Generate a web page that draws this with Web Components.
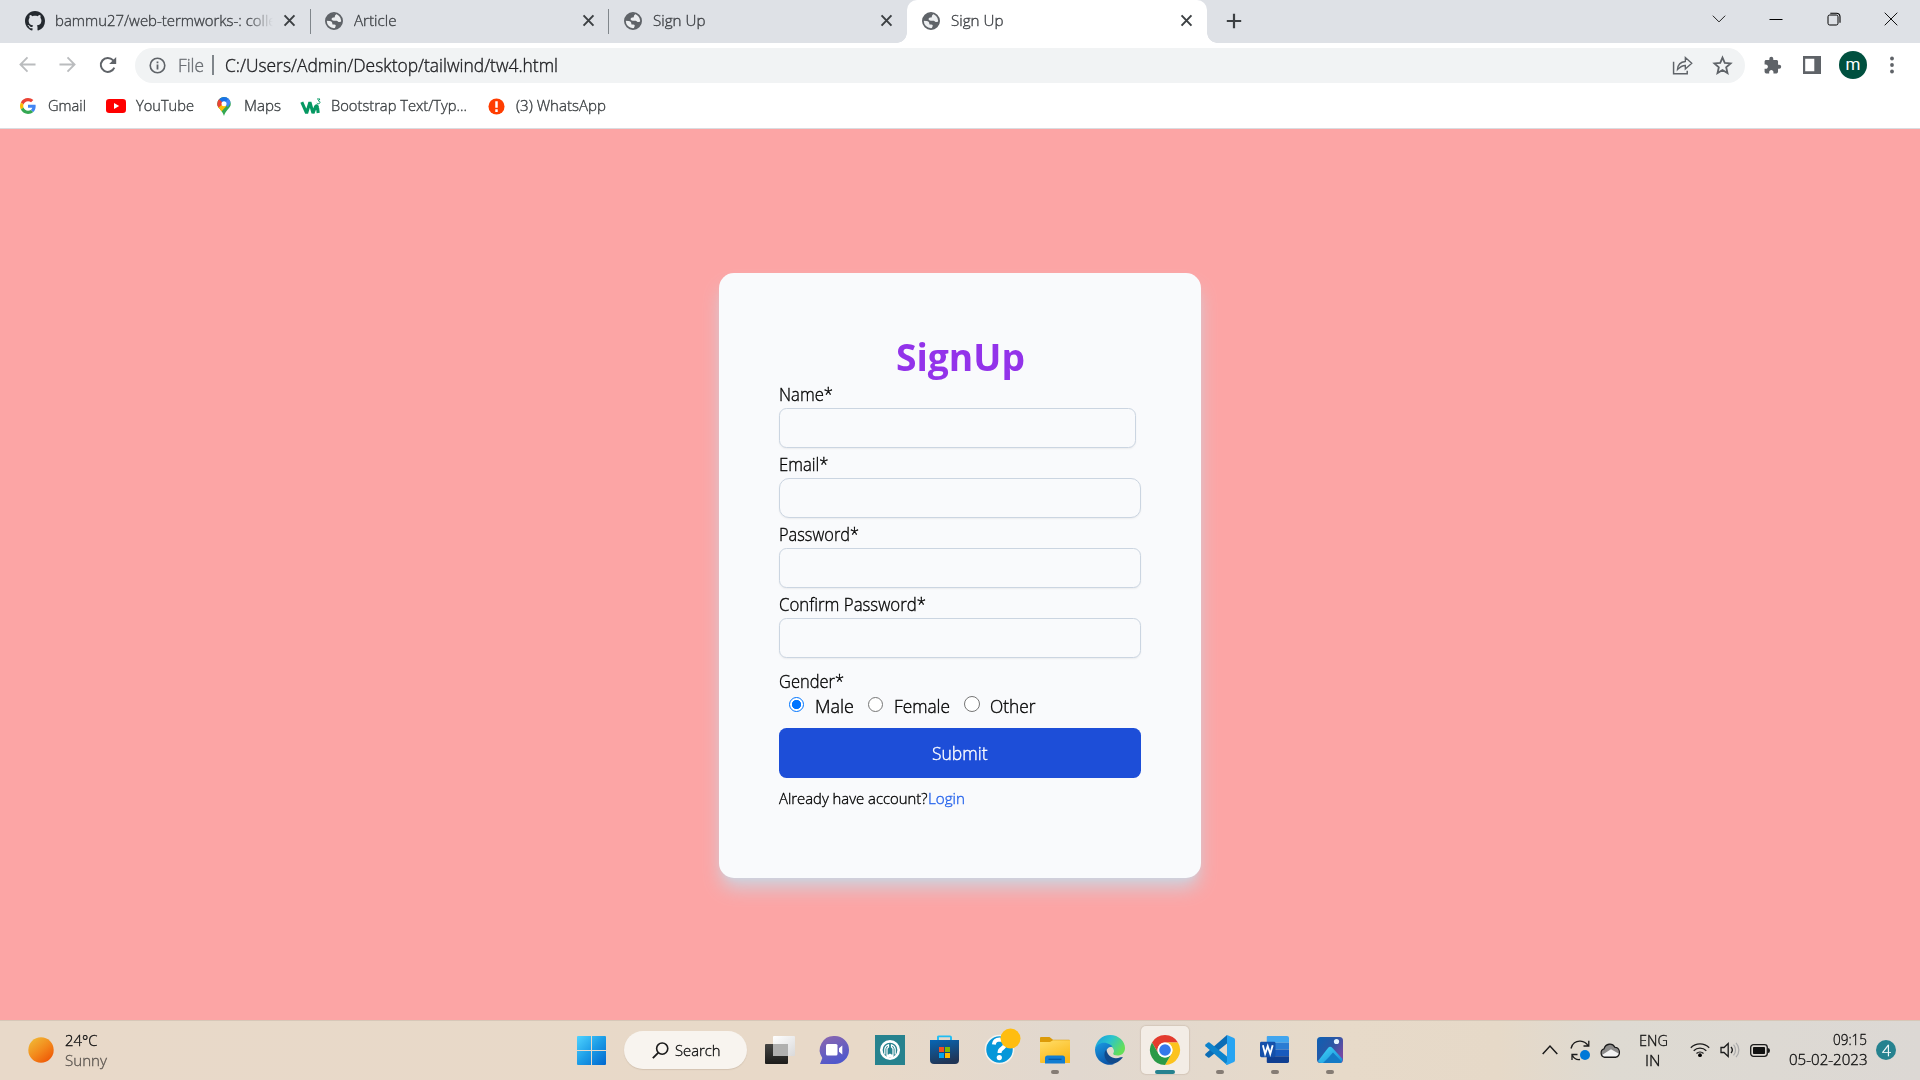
<!DOCTYPE html>
<html lang="en">
<head>
<meta charset="utf-8">
<title>Sign Up</title>
<style>
html,body{margin:0;height:100%;overflow:hidden}
body{display:flex;flex-direction:column;width:1920px;height:1080px;font-family:"Open Sans","Noto Sans",sans-serif;font-size:15px;font-weight:300;-webkit-text-stroke:.35px currentColor}
</style>
</head>
<body>
<browser-tabs></browser-tabs>
<browser-toolbar></browser-toolbar>
<bookmark-bar></bookmark-bar>
<signup-page></signup-page>
<task-bar></task-bar>
<script>
const ICONS = {
github:['0 0 16 16','<path fill="#24292f" d="M8 0C3.58 0 0 3.58 0 8c0 3.54 2.29 6.53 5.47 7.59.4.07.55-.17.55-.38 0-.19-.01-.82-.01-1.49-2.01.37-2.53-.49-2.69-.94-.09-.23-.48-.94-.82-1.13-.28-.15-.68-.52-.01-.53.63-.01 1.08.58 1.23.82.72 1.21 1.87.87 2.33.66.07-.52.28-.87.51-1.07-1.78-.2-3.64-.89-3.64-3.95 0-.87.31-1.59.82-2.15-.08-.2-.36-1.02.08-2.12 0 0 .67-.21 2.2.82.64-.18 1.32-.27 2-.27s1.36.09 2 .27c1.53-1.04 2.2-.82 2.2-.82.44 1.1.16 1.92.08 2.12.51.56.82 1.27.82 2.15 0 3.07-1.87 3.75-3.65 3.95.29.25.54.73.54 1.48 0 1.07-.01 1.93-.01 2.2 0 .21.15.46.55.38A8.01 8.01 0 0 0 16 8c0-4.42-3.58-8-8-8z"/>'],
globe:['0 0 18 18','<circle cx="9" cy="9" r="8.1" fill="#eceef0" stroke="#5f6368" stroke-width="1.8"/><path fill="#5f6368" d="M9.6 1.2C5 1 1.500 4.500 1.200 8.800L4.600 9.100C6.300 9.200 7.300 10.300 7.300 11.600L7.500 12.500H9.300C10.500 12.500 11 13.400 10.600 14.200L9.800 16.400C13.700 16 16.800 13 16.900 9C15.500 10.600 13.600 10.300 12.600 9.200C11.900 8.500 10.500 8.600 9.300 8.700C7.500 8.900 6.300 8 6.600 6.800C6.900 5.800 7.900 5.600 8.900 5.500C9.800 5.400 9.900 4.700 9.900 3.900C10.200 3 11.300 3 11.500 1.600Z"/>'],
x:['0 0 10 10','<path d="M.5.300 9.500 9.700M9.500.300.5 9.700" stroke="#3c4043" stroke-width="1.800"/>'],
plus:['0 0 16 16','<path d="M8 .8v14.400M.8 8h14.400" stroke="#3c4043" stroke-width="2.200"/>'],
down:['0 0 14 14','<path d="m.8 3.700 6.200 6.200 6.200-6.200" fill="none" stroke="#222"/>'],
min:['0 0 14 14','<path d="M.5 7.500h13" stroke="#000" stroke-width="1"/>'],
restore:['0 0 14 14','<rect x="1" y="3" width="10" height="10" rx="1.700" fill="none" stroke="#000"/><path d="M3.300 1.200h6.200a3.500 3.500 0 0 1 3.500 3.500v6" fill="none" stroke="#000" stroke-width="1.100"/>'],
close:['0 0 14 14','<path d="M.7.7 13.300 13.300M13.300.7.7 13.300" stroke="#111"/>'],
back:['0 0 18 18','<path d="M17.500 9H2M9 1.500 1.500 9 9 16.500" fill="none" stroke="#babcbe" stroke-width="1.900"/>'],
fwd:['0 0 18 18','<path d="M.5 9H16M9 1.500 16.500 9 9 16.500" fill="none" stroke="#babcbe" stroke-width="1.900"/>'],
reload:['0 0 18 18','<path d="M15.300 11.600A7 7 0 1 1 14 4.200l1.500 1.500" fill="none" stroke="#5f6368" stroke-width="2"/><path d="M17.200 1v7h-7z" fill="#5f6368"/>'],
info:['0 0 18 18','<circle cx="9" cy="9" r="7.700" fill="none" stroke="#5f6368" stroke-width="1.700"/><path d="M9 8v5.200M9 4.700v1.900" stroke="#5f6368" stroke-width="1.900"/>'],
share:['0 0 20 18','<path d="M1.500 5.500V17H14.500V14" fill="none" stroke="#5f6368" stroke-width="1.400"/><path d="M5.200 13C5.500 8 8.500 5.500 12.700 5.200V1.500L18.800 7 12.700 12.300V9C9.500 9 7.500 10.500 5.200 13Z" fill="none" stroke="#5f6368" stroke-width="1.300"/>'],
star:['0 0 18 18','<path d="m9 1.500 2.150 5.100 5.500.48-4.170 3.620 1.250 5.400L9 13.200 4.270 16.100l1.250-5.400L1.350 7.080l5.500-.48Z" fill="none" stroke="#5f6368" stroke-width="1.700"/>'],
puzzle:['0 0 24 24','<path fill="#5f6368" d="M20.500 11H19V7c0-1.100-.9-2-2-2h-4V3.500a2.500 2.500 0 0 0-5 0V5H4c-1.100 0-1.990.9-1.990 2v3.800H3.500c1.490 0 2.700 1.210 2.700 2.700s-1.210 2.700-2.700 2.700H2V20c0 1.100.9 2 2 2h3.800v-1.500c0-1.490 1.210-2.700 2.700-2.700 1.490 0 2.700 1.210 2.700 2.700V22H17c1.100 0 2-.9 2-2v-4h1.500a2.500 2.500 0 0 0 0-5z"/>'],
panel:['0 0 18 18','<path fill="#5f6368" fill-rule="evenodd" d="M0 0H18V18H0ZM2.200 2.700V15.300H11.300V2.700Z"/>'],
dots:['0 0 6 18','<g fill="#5f6368"><circle cx="3" cy="2.500" r="1.900"/><circle cx="3" cy="9" r="1.900"/><circle cx="3" cy="15.500" r="1.900"/></g>'],
google:['0 0 48 48','<path fill="#EA4335" d="M24 9.500c3.540 0 6.710 1.220 9.210 3.600l6.850-6.850C35.900 2.380 30.470 0 24 0 14.620 0 6.510 5.380 2.560 13.220l7.980 6.190C12.430 13.720 17.740 9.500 24 9.500z"/><path fill="#4285F4" d="M46.980 24.550c0-1.570-.15-3.090-.38-4.550H24v9.020h12.940c-.58 2.960-2.260 5.480-4.780 7.180l7.730 6c4.510-4.180 7.090-10.360 7.090-17.650z"/><path fill="#FBBC05" d="M10.530 28.590c-.48-1.450-.76-2.990-.76-4.590s.27-3.140.76-4.590l-7.980-6.190C.92 16.460 0 20.120 0 24c0 3.880.92 7.540 2.560 10.780l7.970-6.190z"/><path fill="#34A853" d="M24 48c6.480 0 11.930-2.130 15.890-5.810l-7.730-6c-2.150 1.450-4.920 2.300-8.160 2.300-6.260 0-11.570-4.220-13.470-9.910l-7.980 6.190C6.510 42.620 14.620 48 24 48z"/>'],
youtube:['0 0 20 14','<rect width="20" height="14" rx="3.200" fill="#f00"/><path d="M8 4v6l5.200-3z" fill="#fff"/>'],
maps:['0 0 14 19','<clipPath id="p"><path d="M7 0a6.800 6.800 0 0 0-6.800 6.800C.2 11.500 5.500 13 7 19 8.500 13 13.800 11.500 13.800 6.800A6.800 6.800 0 0 0 7 0Z"/></clipPath><g clip-path="url(#p)"><path fill="#34a853" d="M0 0h14v19H0z"/><path fill="#fbbc04" d="M-1 12 7 3l2.500 6L3 16z"/><path fill="#ea4335" d="M-1 1 3 2 7 6 0 12z"/><path fill="#1a73e8" d="M2 2 7 7l6-6-6-2z"/><path fill="#4285f4" d="M9 0h3l2 5-3 5-4-3 4-5z"/></g><circle cx="7" cy="6.700" r="2.500" fill="#fff"/>'],
w3:['0 0 20 17','<path d="M.8 4.200 5.600 15.200 8.900 4.200 12 15.200 14.600 8.500Q16.300 6.800 16.600 10L17.200 15" fill="none" stroke="#059862" stroke-width="3.100" stroke-linejoin="bevel"/><path d="M16 1h3L17.300 2.900c2.300.1 2.200 2.900-.1 2.900q-.9 0-1.400-.7" fill="none" stroke="#059862" stroke-width="1"/>'],
alert:['0 0 18 18','<circle cx="9" cy="9" r="8.500" fill="#ff3d00"/><path d="M9 3.500v6.800M9 12v2.700" stroke="#fff" stroke-width="2.600"/>'],
sun:['0 0 26 26','<defs><linearGradient id="s" x2=".8" y2="1"><stop stop-color="#f0c13a"/><stop offset=".55" stop-color="#f38a1c"/><stop offset="1" stop-color="#ee5505"/></linearGradient></defs><circle cx="13" cy="13" r="12.700" fill="url(#s)"/>'],
start:['0 0 29 29','<defs><linearGradient id="s" gradientUnits="userSpaceOnUse" x2="29" y2="29"><stop stop-color="#4fd3ff"/><stop offset=".5" stop-color="#1c9ce6"/><stop offset="1" stop-color="#0067cf"/></linearGradient></defs><path fill="url(#s)" d="M1 0h13v14H0V1q0-1 1-1ZM15 0h13q1 0 1 1v13H15ZM0 15h14v14H1q-1 0-1-1ZM15 15h14v13q0 1-1 1H15Z"/>'],
search:['0 0 18 18','<circle cx="10.800" cy="7" r="5.900" fill="none" stroke="#1b1b1b" stroke-width="1.700"/><path d="M6.700 11.200.9 17" stroke="#1b1b1b" stroke-width="2"/>'],
taskview:['0 0 30 28','<defs><linearGradient id="a" y2="1" x2="0"><stop stop-color="#454543"/><stop offset="1" stop-color="#1c1c1a"/></linearGradient><linearGradient id="b" x2="1" y2="1"><stop stop-color="#fff"/><stop offset="1" stop-color="#d9d9da"/></linearGradient></defs><rect y="8" width="23" height="20" rx="1" fill="url(#a)"/><rect x="8" width="22" height="20" rx="1" fill="url(#b)"/><path d="M8 8h15v12H8z" fill="#b0b0af"/>'],
chat:['0 0 29 28','<defs><linearGradient id="a" x2=".4" y2="1"><stop stop-color="#8d67ae"/><stop offset="1" stop-color="#5058cb"/></linearGradient></defs><path fill="url(#a)" d="M14.500 0A14 14 0 0 1 29 14 14 14 0 0 1 14.500 28H0L2.300 22A14 14 0 0 1 14.500 0Z"/><rect x="6" y="8" width="11.500" height="11.500" rx="1.500" fill="#fff"/><path d="M19 12.200 22.300 9.500V18.500L19 15.800Z" fill="#fff"/>'],
teal:['0 0 30 30','<path fill="#26828e" d="M0 0h30v30H0z"/><circle cx="15" cy="15" r="8.700" fill="none" stroke="#fff" stroke-width="2.700"/><path d="M9.800 19.500V14A5.200 5.200 0 0 1 13.500 9.800V12L12 13.500V21M20.200 19.500V14A5.200 5.200 0 0 0 16.500 9.800V12L18 13.500V21" fill="none" stroke="#fff" stroke-width="1.200"/><path d="M12 22V19.500H13.500L15 18.500 16.500 19.500H18V22Z" fill="#fff"/>'],
store:['0 0 29 30','<defs><linearGradient id="a" x2=".3" y2="1"><stop stop-color="#0766b5"/><stop offset="1" stop-color="#203657"/></linearGradient></defs><path d="M8 6V2.200Q8 1.400 9 1.400H20Q21 1.400 21 2.200V6" fill="none" stroke="#20bdf3" stroke-width="1.900"/><path d="M0 5h29v20q0 4-4 4H4q-4 0-4-4z" fill="url(#a)"/><path fill="#f25022" d="M9 12h5v5H9z"/><path fill="#7fba00" d="M15 12h5v5h-5z"/><path fill="#00a4ef" d="M9 18h5v5H9z"/><path fill="#ffb900" d="M15 18h5v5h-5z"/>'],
help:['0 0 38 38','<circle cx="15.500" cy="21.500" r="14" fill="#0697d9" stroke="#f6f3ee" stroke-width="1.500"/><path d="M9.800 16.500Q10.500 11.500 15.500 11.500 21 11.800 21 16 21 18.500 18 20.500 15.500 22 15.500 25" fill="none" stroke="#fff" stroke-width="4"/><circle cx="15.300" cy="29.600" r="2.600" fill="#fff"/><circle cx="26.500" cy="10.500" r="10" fill="#ffbd10"/>'],
folder:['0 0 30 28','<defs><linearGradient id="a" x2=".5" y2="1"><stop stop-color="#ffdd68"/><stop offset="1" stop-color="#fbb91b"/></linearGradient></defs><path d="M0 9V2Q0 1 1 1H9.500L13 3.700H29Q30 3.700 30 5V9Z" fill="#dc9a08"/><path d="M0 6H10L13 4.300H30V27H1Q0 27 0 26Z" fill="url(#a)"/><path d="M5 27.500V22Q5 19.500 7.500 19.500H22.500Q25 19.500 25 22V27.500Z" fill="#127dd1"/><path d="M8.500 23.300h13" stroke="#0656a0" stroke-width="1.200"/>'],
edge:['0 0 30 30','<defs><linearGradient id="a" x2="1" y2=".5"><stop stop-color="#1699df"/><stop offset=".5" stop-color="#2ac3ce"/><stop offset="1" stop-color="#64df58"/></linearGradient><linearGradient id="b" x2=".5" y2="1"><stop stop-color="#199be3"/><stop offset="1" stop-color="#0b55a8"/></linearGradient></defs><path d="M0 14C1 6 7 0 15 0 24 0 30 6.500 30 13 30 18 26.500 20.500 22.500 20.500 19.500 20.500 18 19.500 18.200 18.500 19.500 17 19.300 14 16.500 11.800 12 8 3 8 0 14Z" fill="url(#a)"/><path d="M0 14C2 9 7 6.800 12 8.300 16 9.500 17 11 17.500 11.800 13 11.500 10.500 15 11 19 11.500 25 16.500 28.500 20 28.500 17 30.500 11 30.200 7 27.500 2 24.500 0 19.500 0 14Z" fill="url(#b)"/><path d="M11.300 14.500C8 18 9.500 24 13 27 17 30.500 23.500 28 27.800 22.500 27.500 21.500 26.500 22 25.500 22.300 18 25 12.500 21 11.300 14.500Z" fill="#114a8b"/>'],
chrome:['0 0 48 48','<path fill="#e33b2e" d="M24 0A24 24 0 0 1 44.800 12H24A12 12 0 0 0 13.600 30L3.200 12A24 24 0 0 1 24 0Z"/><path fill="#fcc31e" d="M44.800 12A24 24 0 0 1 24 48L34.400 30A12 12 0 0 0 34.400 18 12 12 0 0 0 24 12Z"/><path fill="#2a9a47" d="M24 48A24 24 0 0 1 3.200 12L13.600 30A12 12 0 0 0 34.400 30Z"/><circle cx="24" cy="24" r="12" fill="#fff"/><circle cx="24" cy="24" r="9.300" fill="#3478ec"/>'],
code:['0 0 30 30','<path d="M22 0 22 8.500 4.500 22.500Q3.600 23 3 22.500L.5 20.400Q-.3 19.500.5 18.700Z" fill="#0b6cb5"/><path d="M22 30V21.500L4.500 7.500Q3.600 7 3 7.500L.5 9.600Q-.3 10.500.5 11.300Z" fill="#0d83cc"/><path d="M22 0 29 3Q30 3.500 30 5V25Q30 26.500 29 27L22 30 20.500 28.500 22 27Z" fill="#27a4f2"/>'],
word:['0 0 30 28','<path fill="#41a5ee" d="M8 0h20q2 0 2 2v5H7V1q0-1 1-1z"/><path fill="#2b7cd3" d="M7 7h23v7H7z"/><path fill="#185abd" d="M7 14h23v7H7z"/><path fill="#103f91" d="M7 21h23v5q0 2-2 2H8q-1 0-1-1z"/><rect y="6" width="16" height="16" rx="1.500" fill="#1550aa"/><path d="m3 9.500 2.300 9L8 10.500l2.600 8 2.500-9" fill="none" stroke="#fff" stroke-width="1.900"/>'],
photos:['0 0 26 26','<defs><linearGradient id="a" x2="1" y2=".6"><stop stop-color="#0e60b3"/><stop offset=".6" stop-color="#2c56a4"/><stop offset="1" stop-color="#754aa4"/></linearGradient><linearGradient id="b" x2="1" y2="1"><stop stop-color="#42d9f8"/><stop offset="1" stop-color="#168bd9"/></linearGradient></defs><rect width="26" height="26" rx="3.500" fill="url(#a)"/><path d="M1 24 11 11Q13 8.500 15.500 11L25.500 22Q25.500 26 22 26H4Q1.500 26 1 24Z" fill="url(#b)"/><path d="M12 20 16 15.500 25 25Q24 26 22 26H6Z" fill="#147ac5"/><circle cx="19.500" cy="4.500" r="2.600" fill="#e5f6ff"/>'],
up:['0 0 16 16','<path d="m.7 12 7.300-8 7.300 8" fill="none" stroke="#1b1b1b" stroke-width="1.500"/>'],
sync:['0 0 20 20','<path d="M1 8.500C2 3.500 6 .8 10.500 1.200 14 1.500 16.800 3.600 18.300 6M18.800.8V6H13.500M2 20V14.500H7.500M2.500 15.500C4 18.500 7 20 10 19.500" fill="none" stroke="#1b1b1b" stroke-width="1.300"/><circle cx="15" cy="15" r="5" fill="#0078d7"/>'],
cloud:['0 1 20 13.2','<path d="M4.500 13.500A3.700 3.700 0 0 1 4 6.200 6.200 6.200 0 0 1 15 4.800 4.400 4.400 0 0 1 16 13.500Z" fill="#8c8b8a"/><path d="M4.500 13.500A3.700 3.700 0 0 1 2 11.500L11 6.500 19 10.500Q18.300 13.500 16 13.500Z" fill="#f3f3f3"/><path d="M4.500 13.500A3.700 3.700 0 0 1 4 6.200 6.200 6.200 0 0 1 15 4.800 4.400 4.400 0 0 1 16 13.500Z" fill="none" stroke="#1b1b1b" stroke-width="1.200"/>'],
wifi:['0 0 20 16','<g fill="none" stroke="#1b1b1b" stroke-width="1.300"><path d="M.8 5.700A13 13 0 0 1 19.200 5.700M3.700 8.700A9 9 0 0 1 16.300 8.700M6.500 11.500A5 5 0 0 1 13.500 11.500"/></g><circle cx="10" cy="13.200" r="1.900"/>'],
sound:['0 0 20 16','<path d="M1 5.500H4L8.200 1.500V14.500L4 10.500H1Z" fill="none" stroke="#1b1b1b" stroke-width="1.300"/><path d="M11 5A4.500 4.500 0 0 1 11 11" fill="none" stroke="#1b1b1b" stroke-width="1.300"/><path d="M13.500 2.700A8 8 0 0 1 13.500 13.300M16 .8A10.500 10.500 0 0 1 16 15.200" fill="none" stroke="#aaa" stroke-width="1.200"/>'],
battery:['0 0 20 13','<rect x=".7" y=".7" width="16.600" height="11.600" rx="2.800" fill="none" stroke="#1b1b1b" stroke-width="1.300"/><rect x="3" y="3" width="12" height="7" rx=".8" fill="#111"/><path d="M18 4q2 0 2 2.500T18 9z" fill="#1b1b1b"/>']
};

class UiIcon extends HTMLElement{
  connectedCallback(){
    if(this.shadowRoot) return;
    const [box,art]=ICONS[this.getAttribute('name')];
    const [,,bw,bh]=box.split(' ').map(Number);
    const w=+this.getAttribute('w'), h=+(this.getAttribute('h')||w*bh/bw);
    this.attachShadow({mode:'open'}).innerHTML=`<style>:host{display:block;flex:none;width:${w}px;height:${h}px}svg{display:block;overflow:visible}</style><svg width="${w}" height="${h}" viewBox="${box}" preserveAspectRatio="none">${art}</svg>`;
  }
}
/* A text run condensed or widened to a set advance width. */
class FitText extends HTMLElement{
  connectedCallback(){
    if(this.shadowRoot) return;
    const w=+this.getAttribute('w');
    this.attachShadow({mode:'open'}).innerHTML=`<style>:host{display:block;flex:none;width:${w}px;white-space:pre;line-height:20px}span{display:inline-block;transform-origin:0 50%}</style><span><slot></slot></span>`;
    const s=this.shadowRoot.querySelector('span');
    const n=s.getBoundingClientRect().width;
    s.style.transform=`scaleX(${w/n})`;
  }
}
const element=(name,html)=>customElements.define(name,class extends HTMLElement{
  connectedCallback(){
    if(this.shadowRoot) return;
    const t=document.createElement('template');
    t.innerHTML=html;
    this.attachShadow({mode:'open'}).append(document.importNode(t.content,true));
  }
});

element('browser-tab',`<style>
:host{display:flex;box-sizing:border-box;width:298.6px;height:43px;flex:none;position:relative;padding:0 14.500px 2px 15px;align-items:center;color:#3f4246}
.title{flex:1;display:flex;overflow:hidden;margin:0 11px 0 11px;padding-bottom:2px}
:host([sep])::after{content:"";position:absolute;right:-1px;top:9px;width:1px;height:25px;background:#80868b}
:host([fade]) .title{mask-image:linear-gradient(90deg,#000 calc(100% - 26px),transparent)}
:host([active]){width:300px;background:#fff;border-radius:10px 10px 0 0}
:host([active])::before,:host([active])::after{content:"";position:absolute;bottom:0;width:10px;height:10px}
:host([active])::before{left:-10px;background:radial-gradient(circle at 0 0,transparent 9.500px,#fff 10px)}
:host([active])::after{right:-10px;background:radial-gradient(circle at 100% 0,transparent 9.500px,#fff 10px)}
</style><slot name="icon"></slot><div class="title"><slot></slot></div><ui-icon name="x" w="11"></ui-icon>`);

element('browser-tabs',`<style>
:host{display:flex;flex:none;height:43px;background:#dee1e6;padding-left:10px}
.first{width:299.500px;padding-left:14.500px}
.mid{padding-left:15.500px}
.plus{margin:13px auto 0 19px}
.win{display:flex;align-items:center;gap:43.500px;height:37px;padding-right:22px}
</style>
<browser-tab class="first" sep fade><ui-icon slot="icon" name="github" w="20"></ui-icon><fit-text w="221.500" style="margin-left:-.500px">bammu27/web-termworks-: colle</fit-text></browser-tab>
<browser-tab class="mid" sep><ui-icon slot="icon" name="globe" w="18"></ui-icon><fit-text w="42.500">Article</fit-text></browser-tab>
<browser-tab class="mid"><ui-icon slot="icon" name="globe" w="18"></ui-icon><fit-text w="52.500">Sign Up</fit-text></browser-tab>
<browser-tab active><ui-icon slot="icon" name="globe" w="18"></ui-icon><fit-text w="52.500">Sign Up</fit-text></browser-tab>
<ui-icon class="plus" name="plus" w="16"></ui-icon>
<div class="win"><ui-icon name="down" w="14"></ui-icon><ui-icon name="min" w="14"></ui-icon><ui-icon name="restore" w="14"></ui-icon><ui-icon name="close" w="14"></ui-icon></div>`);

element('browser-toolbar',`<style>
:host{display:flex;flex:none;height:44px;align-items:center;background:#fff;padding:0 25px 0 19px;box-sizing:border-box}
.nav{display:flex;gap:22.800px;width:116px}
.box{display:flex;align-items:center;box-sizing:border-box;height:35px;width:1610px;border-radius:18px;background:#f1f3f4;padding:0 13px 0 14px;font-size:17.500px;color:#202124}
.box .file{color:#6b6f74;margin-left:11.500px}
.bar{width:1.500px;height:20px;background:#80868b;margin:0 11px 0 8.500px}
.end{display:flex;gap:20px;margin-left:auto;align-items:center}
.right{display:flex;align-items:center;margin-left:18px}
.me{width:28px;height:28px;border-radius:50%;background:#00503f;color:#fff;display:flex;justify-content:center;font:400 17px/26px Roboto,sans-serif;-webkit-text-stroke:0;margin:0 22px 0 18px}
</style>
<div class="nav"><ui-icon name="back" w="17"></ui-icon><ui-icon name="fwd" w="17"></ui-icon><ui-icon name="reload" w="18"></ui-icon></div>
<div class="box"><ui-icon name="info" w="17"></ui-icon><fit-text class="file" w="26">File</fit-text><span class="bar"></span><fit-text w="333">C:/Users/Admin/Desktop/tailwind/tw4.html</fit-text>
<div class="end"><ui-icon name="share" w="21"></ui-icon><ui-icon name="star" w="19"></ui-icon></div></div>
<div class="right"><ui-icon name="puzzle" w="19"></ui-icon><ui-icon name="panel" w="18" style="margin-left:21px"></ui-icon><span class="me">m</span><ui-icon name="dots" w="6"></ui-icon></div>`);

element('bookmark-bar',`<style>
:host{display:flex;flex:none;height:42px;align-items:center;box-sizing:border-box;background:#fff;border-bottom:1px solid #dadce0;padding:0 0 3px 20px;color:#3c4043;font-size:15px}
a{display:flex;align-items:center;flex:none}
fit-text{margin-bottom:2px}
</style>
<a style="width:86px;gap:12px"><ui-icon name="google" w="16"></ui-icon><fit-text w="38">Gmail</fit-text></a>
<a style="width:110.500px;gap:10px"><ui-icon name="youtube" w="20"></ui-icon><fit-text w="58">YouTube</fit-text></a>
<a style="width:84.500px;gap:13.500px"><ui-icon name="maps" w="14"></ui-icon><fit-text w="37">Maps</fit-text></a>
<a style="width:186.500px;gap:9.500px"><ui-icon name="w3" w="20"></ui-icon><fit-text w="136">Bootstrap Text/Typ...</fit-text></a>
<a style="gap:11.500px"><ui-icon name="alert" w="17"></ui-icon><fit-text w="90">(3) WhatsApp</fit-text></a>`);

element('form-field',`<style>
:host{display:block;height:70px;--r:7.500px;--bw:362px;flex:none;color:#000;font-size:17.800px}
.label{height:23.500px;box-sizing:border-box;padding-bottom:3.500px;display:flex;align-items:center}
input{display:block;box-sizing:border-box;width:var(--bw);height:40px;border:1px solid #cbd5e1;border-radius:var(--r);background:#f9fafc;box-shadow:0 1px 2px rgba(0,0,0,.06);margin:0;padding:0 12px;outline:0}
</style><div class="label"><slot></slot></div><input>`);

element('gender-option',`<style>
:host{display:flex;flex:none;align-items:center;color:#000;font-size:17.800px}
i{box-sizing:border-box;width:15px;height:15px;border:1.200px solid #767676;border-radius:50%;background:#fff;margin:0 11px 4px 0}
:host([on]) i{border:1.500px solid #0075ff;background:radial-gradient(circle,#0075ff 4.300px,#fff 5px)}
:host([big]) i{width:16px;height:16px;margin-right:10px}
</style><i></i><slot></slot>`);

element('signup-card',`<style>
:host{display:flex;flex-direction:column;box-sizing:border-box;width:482px;height:605px;background:#f9fafc;border-radius:15px;padding:60px;box-shadow:0 12.500px 18.750px -3.750px #cbd5e1,0 5px 7.500px -5px #cbd5e1}
.h{display:flex;justify-content:center;height:51px;box-sizing:border-box;padding-bottom:3px;align-items:center;color:#9333ea;font-weight:700;font-size:37px;-webkit-text-stroke:0}
.g{margin-top:4.500px;height:25px;display:flex;align-items:center;font-size:17.800px}
.row{display:flex;height:25px;align-items:center;padding-left:10px}
button{display:flex;justify-content:center;align-items:center;flex:none;width:362px;height:50px;border:0;border-radius:7.500px;background:#1d4ed8;color:#fff;font:inherit;font-size:17.800px;margin:9px 0 0;padding:1px 0 0 0}
.foot{display:flex;font-size:15px;margin-top:10.500px;color:#000}
.foot a{color:#2563eb}
</style>
<div class="h"><fit-text w="129">SignUp</fit-text></div>
<form-field style="--bw:357px"><fit-text w="54">Name*</fit-text></form-field>
<form-field style="--r:10px"><fit-text w="49.500">Email*</fit-text></form-field>
<form-field><fit-text w="80">Password*</fit-text></form-field>
<form-field><fit-text w="147">Confirm Password*</fit-text></form-field>
<div class="g"><fit-text w="65">Gender*</fit-text></div>
<div class="row"><gender-option on><fit-text w="39">Male</fit-text></gender-option>
<gender-option style="margin-left:14px"><fit-text w="56" style="margin-left:-.500px">Female</fit-text></gender-option>
<gender-option big style="margin-left:14.500px"><fit-text w="45.500" style="margin-left:-.500px">Other</fit-text></gender-option></div>
<button><fit-text w="55.500">Submit</fit-text></button>
<div class="foot"><fit-text w="148.500">Already have account?</fit-text><a><fit-text w="37">Login</fit-text></a></div>`);

element('signup-page',`<style>:host{display:flex;flex:1;align-items:flex-start;justify-content:center;background:#fca5a5;padding-top:144px;box-sizing:border-box}</style><signup-card></signup-card>`);

element('task-app',`<style>
:host{display:flex;box-sizing:border-box;position:relative;width:48px;height:48px;margin:0 3.500px;flex:none;align-items:center;justify-content:center;border-radius:5px}
:host([open])::after,:host([active])::after{content:"";position:absolute;bottom:0;left:20px;width:8px;height:4px;border-radius:2px;background:#857c74}
:host([active]){background:#f3ede6;box-shadow:0 0 1px 1px rgba(170,150,130,.25)}
:host([active])::after{left:14px;width:20px;background:#26828f}
</style><slot></slot>`);

element('task-bar',`<style>
:host{display:flex;flex:none;height:60px;box-sizing:border-box;border-top:1px solid #d7c7b8;padding-bottom:1px;background:linear-gradient(90deg,#e8d9c9 0,#e8d9c8 45%,#e1d8cf 56%,#e7dac9 70%,#e6d9c8 78%,#dedad2 84%,#dcd8d4 100%);align-items:center;color:#111;font-size:15px}
.weather{display:flex;align-items:center;gap:10.500px;width:545px;padding-left:28px}
.weather>div{padding-bottom:1px}
.weather div div{color:#5f5953}
.apps{display:flex;align-items:center;margin-left:-9px}
.search{display:flex;align-items:center;box-sizing:border-box;width:123px;height:38px;border-radius:19px;background:#f8f4ef;box-shadow:0 1px 1px rgba(150,130,110,.25);padding-left:28.500px;gap:6px;margin:0 3.500px 0 4.500px}
.tray{display:flex;align-items:center;margin-left:auto;padding-right:24px}
.lang{display:flex;flex-direction:column;align-items:center;margin:0 22.500px 1px 18.500px}
.time{display:flex;flex-direction:column;align-items:flex-end;margin:0 9px 2px 18.500px}
.badge{display:flex;justify-content:center;width:20px;height:20px;border-radius:50%;background:#26828f;color:#fff;font-size:15px}
</style>
<div class="weather"><ui-icon name="sun" w="26"></ui-icon><div><fit-text w="32.500">24°C</fit-text><div><fit-text w="42">Sunny</fit-text></div></div></div>
<div class="apps">
<task-app><ui-icon name="start" w="29"></ui-icon></task-app>
<div class="search"><ui-icon name="search" w="17"></ui-icon><fit-text w="45.500">Search</fit-text></div>
<task-app style="margin-left:5.500px"><ui-icon name="taskview" w="30"></ui-icon></task-app>
<task-app><ui-icon name="chat" w="29"></ui-icon></task-app>
<task-app><ui-icon name="teal" w="30"></ui-icon></task-app>
<task-app><ui-icon name="store" w="29"></ui-icon></task-app>
<task-app><ui-icon name="help" w="38" style="margin:-7px 0 0 7px"></ui-icon></task-app>
<task-app open><ui-icon name="folder" w="30"></ui-icon></task-app>
<task-app><ui-icon name="edge" w="30"></ui-icon></task-app>
<task-app active><ui-icon name="chrome" w="30"></ui-icon></task-app>
<task-app open><ui-icon name="code" w="30"></ui-icon></task-app>
<task-app open><ui-icon name="word" w="29"></ui-icon></task-app>
<task-app open><ui-icon name="photos" w="26"></ui-icon></task-app>
</div>
<div class="tray"><ui-icon name="up" w="16"></ui-icon><ui-icon name="sync" w="20" style="margin-left:12px"></ui-icon><ui-icon name="cloud" w="20" h="15" style="margin-left:10px"></ui-icon>
<div class="lang"><fit-text w="29">ENG</fit-text><fit-text w="15.500">IN</fit-text></div>
<ui-icon name="wifi" w="20"></ui-icon><ui-icon name="sound" w="20" style="margin-left:10px"></ui-icon><ui-icon name="battery" w="20" style="margin-left:10px"></ui-icon>
<div class="time"><fit-text w="34">09:15</fit-text><fit-text w="78.500">05-02-2023</fit-text></div>
<span class="badge"><fit-text w="9">4</fit-text></span></div>`);

customElements.define('ui-icon',UiIcon);
customElements.define('fit-text',FitText);
</script>
</body>
</html>
